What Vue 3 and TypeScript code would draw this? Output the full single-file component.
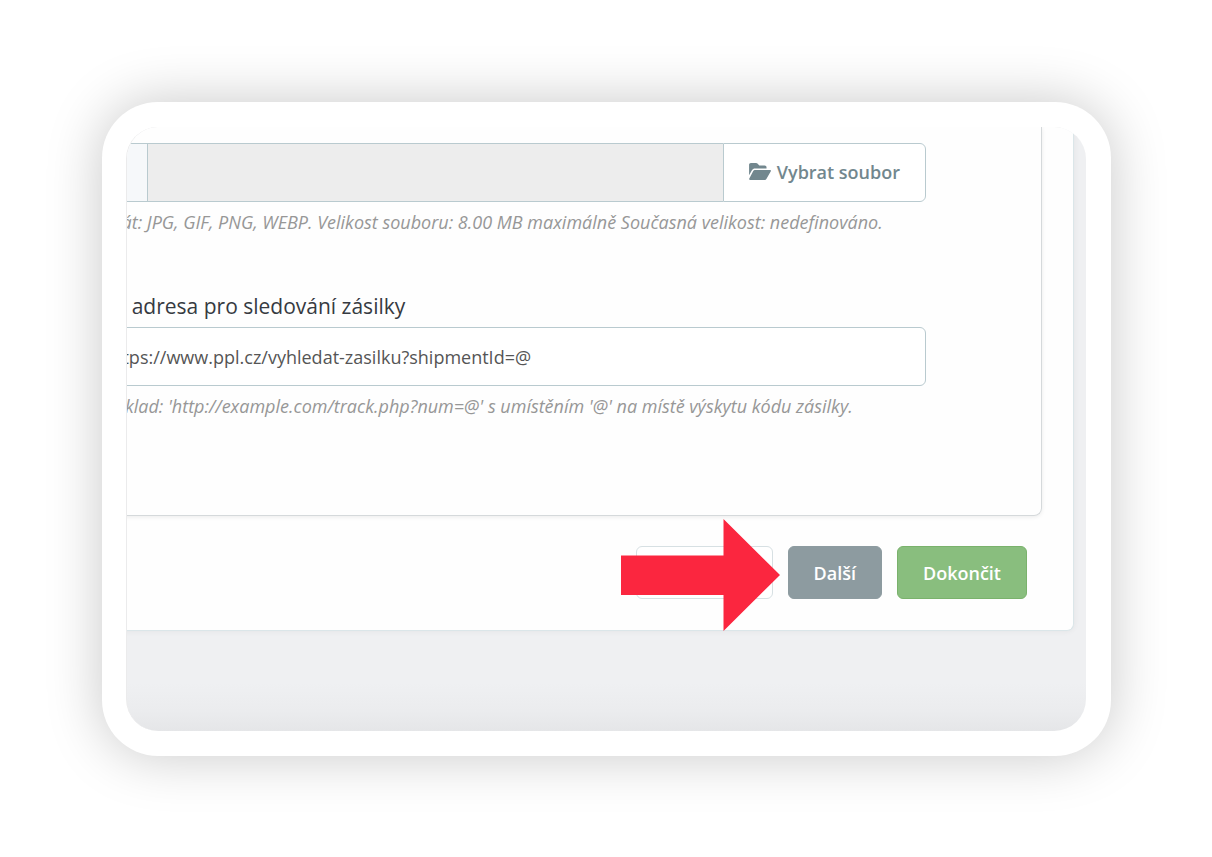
<script setup lang="ts">
import { ref } from 'vue'

const fileName = ref('')
const trackingUrl = ref('https://www.ppl.cz/vyhledat-zasilku?shipmentId=@')
</script>

<template>
  <main class="stage">
    <div class="frame">
      <div class="screen">
        <form class="panel" @submit.prevent>
          <section class="step">
            <div class="file-row">
              <span class="addon"></span>
              <input v-model="fileName" class="file-name" type="text" aria-label="Logo" readonly />
              <button class="browse" type="button">
                <svg class="folder" viewBox="0 0 576 448" aria-hidden="true">
                  <path d="M384 144H152c-30 0-58 16-73 42L0 322V48C0 21.500 21.500 0 48 0h138c13 0 25 5 34 14l50 50h142c26.500 0 48 21.500 48 48v32z" />
                  <path d="M152 184h400c18 0 30 20 21 36L456 424c-9 15-24 24-41 24H24c-18 0-30-20-21-36l107-204c9-15 25-24 42-24z" />
                </svg>
                <span>Vybrat soubor</span>
              </button>
            </div>
            <p class="help">Formát: JPG, GIF, PNG, WEBP. Velikost souboru: 8.00 MB maximálně Současná velikost: nedefinováno.</p>

            <label class="label" for="tracking-url">URL adresa pro sledování zásilky</label>
            <input id="tracking-url" v-model="trackingUrl" class="text-field" type="text" />
            <p class="help">Například: 'http://example.com/track.php?num=@' s umístěním '@' na místě výskytu kódu zásilky.</p>
          </section>

          <div class="actions">
            <div class="previous-wrap">
              <button class="btn previous" type="button" aria-label="Předchozí"></button>
              <svg class="arrow" viewBox="0 0 159 112" aria-hidden="true">
                <path d="M0 36.500H102.500V0L159 56L102.500 112V76H0Z" />
              </svg>
            </div>
            <button class="btn next" type="button">Další</button>
            <button class="btn finish" type="submit">Dokončit</button>
          </div>
        </form>
      </div>
    </div>
  </main>
</template>

<style>
body {
  margin: 0;
  background: #fff;
}
</style>

<style scoped>
.stage {
  box-sizing: border-box;
  min-height: 100vh;
  padding: 102px 101px 101px 102px;
  overflow: hidden;
  font-family: "Open Sans", "Noto Sans", sans-serif;
  font-size: 18px;
}

.frame {
  padding: 25px 25px 25px 24px;
  border-radius: 56px;
  background: #fff;
  box-shadow: 0 0 56px rgba(0, 0, 0, 0.22);
}

.screen {
  overflow: hidden;
  padding-bottom: 100px;
  border-left: 1px solid #ebebec;
  border-radius: 32px;
  background: linear-gradient(to top, #e5e6e8 0, #ebecee 20px, #eff0f2 48px);
}

.panel {
  box-sizing: border-box;
  margin-left: -100px;
  margin-right: 12px;
  padding-right: 31px;
  padding-bottom: 31px;
  border: 1px solid #dbe6e9;
  border-top: 0;
  border-radius: 0 0 7px 7px;
  background: #fefefe;
  box-shadow: 0 0 6px rgba(0, 0, 0, 0.06);
}

.step {
  padding: 16px 115px 96px 56px;
  border: 1px solid #d5d9db;
  border-width: 0 1px 1px 0;
  border-radius: 0 0 8px 0;
  box-shadow: 0 1px 4px rgba(0, 0, 0, 0.08);
}

.file-row {
  display: flex;
  height: 59px;
}

.addon {
  box-sizing: border-box;
  width: 63px;
  border: 1px solid #b9cacf;
  border-right: 0;
  background: #f6f8fa;
}

.file-name {
  box-sizing: border-box;
  flex: 1;
  min-width: 0;
  border: 1px solid #b9cacf;
  border-right: 0;
  border-radius: 0;
  background: #ededed;
  font: inherit;
}

.browse {
  display: flex;
  align-items: center;
  gap: 6px;
  box-sizing: border-box;
  padding: 0 25px 2px;
  border: 1px solid #b9cacf;
  border-radius: 0 6px 6px 0;
  background: #fff;
  color: #72878e;
  font: inherit;
  font-weight: 600;
}

.folder {
  width: 22px;
  height: 17px;
  fill: #72878e;
}

.help {
  margin: 7px 0 0 -4px;
  color: #979797;
  font-style: italic;
  line-height: 26px;
  white-space: nowrap;
}

.label {
  display: block;
  margin-top: 56px;
  padding: 0 0 6px 3px;
  color: #363a41;
  font-size: 21px;
  line-height: 30px;
}

.text-field {
  display: block;
  box-sizing: border-box;
  width: 100%;
  height: 59px;
  padding: 0 20px;
  border: 1px solid #b9cacf;
  border-radius: 6px;
  background: #fff;
  color: #555;
  font: inherit;
}

.actions {
  display: flex;
  justify-content: flex-end;
  gap: 15px;
  padding: 30px 15px 0 0;
}

.btn {
  box-sizing: border-box;
  height: 53px;
  padding: 0 25px;
  border: 1px solid;
  border-radius: 6px;
  color: #fff;
  font: inherit;
  font-weight: 600;
}

.previous-wrap {
  position: relative;
  width: 137px;
}

.previous {
  display: block;
  width: 100%;
  border-color: #d7e0e3;
  background: #fff;
}

.next {
  border-color: #8d9ba0;
  background: #8d9ba0;
}

.finish {
  border-color: #7ab26c;
  background: #89be7e;
}

.arrow {
  position: absolute;
  top: -27px;
  left: -15px;
  width: 159px;
  height: 112px;
  fill: #fb263f;
}
</style>
